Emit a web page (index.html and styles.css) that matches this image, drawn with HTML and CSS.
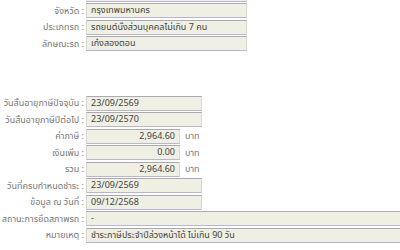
FILE: index.html
```html
<!DOCTYPE html>
<html lang="th">
<head>
    <meta charset="UTF-8">
    <title>ข้อมูลภาษีรถ</title>
    <link rel="stylesheet" href="styles.css">
</head>
<body>
    <div class="tax-info">
        <div class="group group-top">
            <div class="row">
                <span class="label"></span>
                <span class="box box-md"></span>
            </div>
            <div class="row">
                <span class="label">จังหวัด :</span>
                <span class="box box-md">กรุงเทพมหานคร</span>
            </div>
            <div class="row">
                <span class="label">ประเภทรถ :</span>
                <span class="box box-md">รถยนต์นั่งส่วนบุคคลไม่เกิน 7 คน</span>
            </div>
            <div class="row">
                <span class="label">ลักษณะรถ :</span>
                <span class="box box-md">เก๋งสองตอน</span>
            </div>
        </div>

        <div class="group group-tax">
            <div class="row">
                <span class="label">วันสิ้นอายุภาษีปัจจุบัน :</span>
                <span class="box box-sm">23/09/2569</span>
            </div>
            <div class="row">
                <span class="label">วันสิ้นอายุภาษีปีต่อไป :</span>
                <span class="box box-sm">23/09/2570</span>
            </div>
            <div class="row">
                <span class="label">ค่าภาษี :</span>
                <span class="box box-num">2,964.60</span>
                <span class="unit">บาท</span>
            </div>
            <div class="row">
                <span class="label">เงินเพิ่ม :</span>
                <span class="box box-num">0.00</span>
                <span class="unit">บาท</span>
            </div>
            <div class="row">
                <span class="label">รวม :</span>
                <span class="box box-num">2,964.60</span>
                <span class="unit">บาท</span>
            </div>
            <div class="row">
                <span class="label">วันที่ครบกำหนดชำระ :</span>
                <span class="box box-sm">23/09/2569</span>
            </div>
            <div class="row">
                <span class="label">ข้อมูล ณ วันที่ :</span>
                <span class="box box-sm">09/12/2568</span>
            </div>
            <div class="row">
                <span class="label">สถานะการยึดสภาพรถ :</span>
                <span class="box box-wide">-</span>
            </div>
            <div class="row">
                <span class="label">หมายเหตุ :</span>
                <span class="box box-wide">ชำระภาษีประจำปีล่วงหน้าได้ ไม่เกิน 90 วัน</span>
            </div>
        </div>
    </div>
</body>
</html>
```

FILE: styles.css
```css
body {
    margin: 0;
    padding: 0;
    background-color: #ffffff;
    font-family: Tahoma, "Noto Sans Thai", "Liberation Sans", sans-serif;
    font-size: 9px;
    color: #555;
    overflow: hidden;
}

.tax-info {
    width: 420px;
}

.group {
    display: flex;
    flex-direction: column;
    gap: 1.5px;
}

.group-top {
    margin-top: -13.5px;
}

.group-tax {
    margin-top: 44.5px;
}

.row {
    display: flex;
    align-items: center;
    height: 15px;
}

.label {
    width: 84px;
    flex-shrink: 0;
    text-align: right;
    padding-right: 2px;
    color: #777;
    white-space: nowrap;
}

.box {
    box-sizing: border-box;
    height: 15px;
    line-height: 13px;
    padding: 0 4px;
    background-color: #efefe3;
    border: 1px solid #d8d8d0;
    border-top-color: #a9a9b8;
    border-bottom-color: #b9b6cc;
    color: #444;
    white-space: nowrap;
    overflow: hidden;
}

.box-md {
    width: 161px;
}

.box-sm {
    width: 116px;
}

.box-num {
    width: 94px;
    text-align: right;
}

.box-wide {
    width: 330px;
}

.unit {
    margin-left: 5px;
    color: #777;
}
```
